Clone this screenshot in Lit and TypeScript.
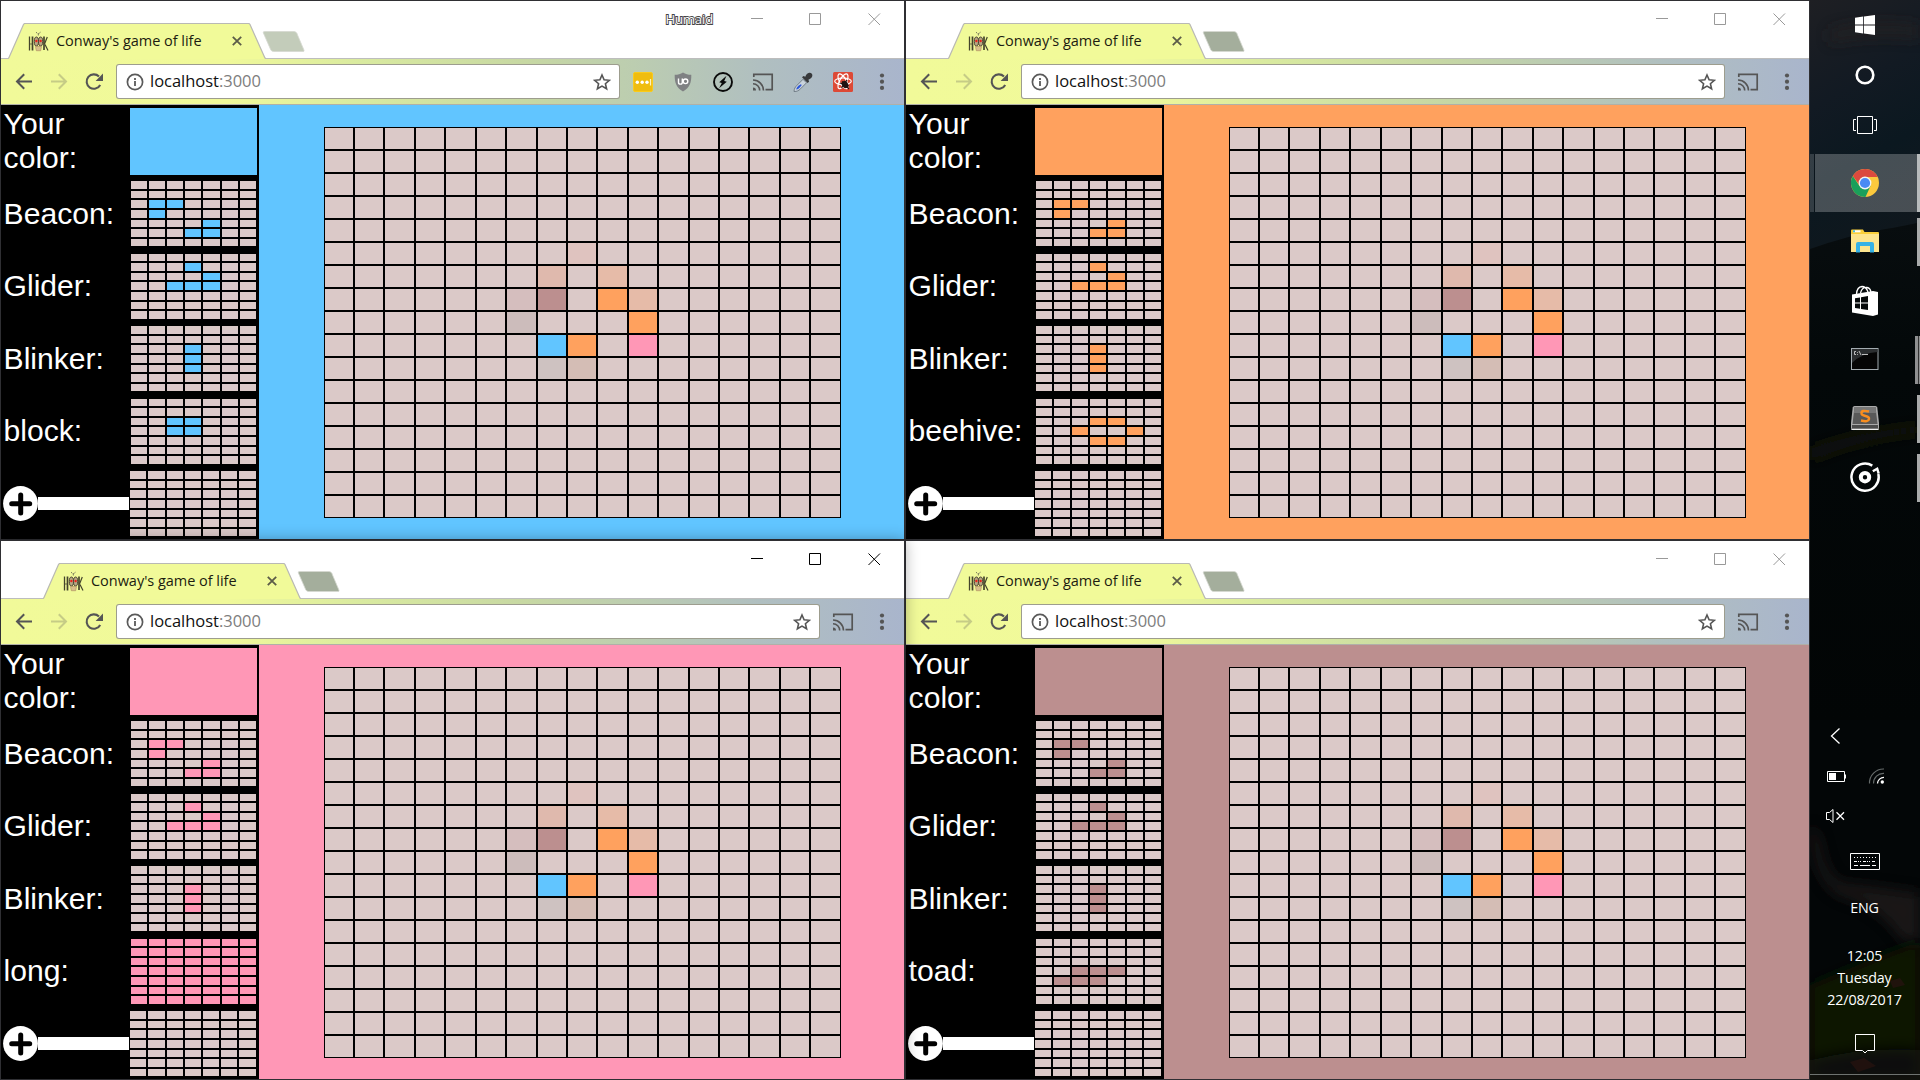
import { LitElement, html, css, svg } from "lit";
import { customElement, property } from "lit/decorators.js";
import { classMap } from "lit/directives/class-map.js";
import { styleMap } from "lit/directives/style-map.js";

type Cell = [number, number];

interface Pattern {
  label: string;
  cells: Cell[];
}

interface Player {
  color: string;
  extra: Pattern;
  tab: "near" | "far";
  active: boolean;
  profile: string;
  extensions: boolean;
}

const BLUE = "#61c5ff";
const ORANGE = "#ffa15e";
const PINK = "#ff97b6";
const ROSE = "#bc8f8f";

const FULL: Cell[] = Array.from({ length: 49 }, (_, i): Cell => [Math.floor(i / 7), i % 7]);

const BASE: Pattern[] = [
  { label: "Beacon:", cells: [[2, 1], [2, 2], [3, 1], [4, 4], [5, 3], [5, 4]] },
  { label: "Glider:", cells: [[1, 3], [2, 4], [3, 2], [3, 3], [3, 4]] },
  { label: "Blinker:", cells: [[2, 3], [3, 3], [4, 3]] },
];

const PLAYERS: Player[] = [
  { color: BLUE, tab: "near", active: false, profile: "Humaid", extensions: true,
    extra: { label: "block:", cells: [[2, 2], [2, 3], [3, 2], [3, 3]] } },
  { color: ORANGE, tab: "far", active: false, profile: "", extensions: false,
    extra: { label: "beehive:", cells: [[2, 3], [2, 4], [3, 2], [3, 5], [4, 3], [4, 4]] } },
  { color: PINK, tab: "far", active: true, profile: "", extensions: false,
    extra: { label: "long:", cells: FULL } },
  { color: ROSE, tab: "far", active: false, profile: "", extensions: false,
    extra: { label: "toad:", cells: [[3, 2], [3, 3], [3, 4], [4, 1], [4, 2], [4, 3]] } },
];

const BOARD: Record<string, string> = {
  "5-8": "#dfc3bf",
  "6-7": "#dfb9ad",
  "6-9": "#e6bba8",
  "7-6": "#d5bebe",
  "7-7": ROSE,
  "7-9": ORANGE,
  "7-10": "#e6bba8",
  "8-6": "#ccbcbb",
  "8-10": ORANGE,
  "9-7": BLUE,
  "9-8": ORANGE,
  "9-10": PINK,
  "10-7": "#cec2c1",
  "10-8": "#d4bdb5",
};

const BOARD_COLUMNS = Array.from({ length: 17 }, (_, k) => {
  const edge = (n: number) => Math.round(323.65 + 30.412 * n);
  return `${edge(k + 1) - edge(k)}px`;
}).join(" ");

/* ---------- Game page ---------- */

@customElement("mini-grid")
class MiniGrid extends LitElement {
  @property({ attribute: false }) cells: Cell[] = [];
  @property() color = "";
  @property() rows = "even";
  @property({ type: Boolean }) empty = false;

  static styles = css`
    :host { display: block; }
    .grid {
      display: grid;
      gap: 2px;
      grid-template-columns: 16px 16px 16px 16px 17px 16px 16px;
      padding: 1px;
      background: #000;
    }
    .even { grid-template-rows: 8px 7px 8px 8px 7px 8px 7px; }
    .odd { grid-template-rows: 7px 8px 7px 8px 8px 7px 8px; }
    .blank {
      padding-left: 0;
      grid-template-columns: 16px 17px 16px 16px 16px 16px 17px;
    }
    .cell { background: #dbc9c8; }
  `;

  render() {
    const alive = new Set(this.cells.map(([r, c]) => r * 7 + c));
    return html`<div class=${classMap({ grid: true, [this.rows]: true, blank: this.empty })}>
      ${FULL.map((_, i) => html`<div class="cell" style=${styleMap(alive.has(i) ? { background: this.color } : {})}></div>`)}
    </div>`;
  }
}

@customElement("game-page")
class GamePage extends LitElement {
  @property({ attribute: false }) player!: Player;

  static styles = css`
    :host { display: block; height: 434px; }
    .page { display: flex; height: 434px; }
    .side {
      width: 258px;
      box-sizing: border-box;
      padding: 3px 0 0 2px;
      background: #000;
      color: #fff;
      font: 30.1px/34px "Liberation Sans", Arial, sans-serif;
    }
    .row { display: flex; align-items: center; height: 67px; margin-bottom: 5px; }
    .row.tall { margin-bottom: 6px; }
    .label { width: 127px; box-sizing: border-box; padding-left: 0.6px; }
    .row.first .label { margin-top: -2px; }
    .row.short .label { margin-top: -2px; }
    .swatch { width: 127px; height: 67px; }
    .maker { width: 127px; display: flex; align-items: center; }
    .plus { width: 35px; height: 35px; display: block; }
    .bar { height: 13px; width: 91px; background: #fff; }
    .main { flex: 1; padding: 22px 0 0 65px; }
    .board {
      display: grid;
      width: 517px;
      grid-auto-rows: 23px;
    }
    .cell { border: 1px solid #000; background: #dbc9c8; }
  `;

  render() {
    const p = this.player;
    const patterns = [...BASE, p.extra];
    return html`
      <div class="page">
        <div class="side">
          <div class="row first">
            <div class="label">Your color:</div>
            <div class="swatch" style=${styleMap({ background: p.color })}></div>
          </div>
          ${patterns.map((x, i) => html`
            <div class=${classMap({ row: true, tall: i % 2 === 0, short: i % 2 === 1 })}>
              <div class="label">${x.label}</div>
              <mini-grid .cells=${x.cells} color=${p.color} rows=${i % 2 ? "odd" : "even"}></mini-grid>
            </div>`)}
          <div class="row">
            <div class="maker">
              <svg class="plus" viewBox="0 0 35 35">
                <circle cx="17.5" cy="17.5" r="17.4" fill="#fff" />
                <path d="M17.7 9v18M8.7 17.7h18" stroke="#000" stroke-width="5" stroke-linecap="round" />
              </svg>
              <div class="bar"></div>
            </div>
            <mini-grid color=${p.color} rows="even" empty></mini-grid>
          </div>
        </div>
        <div class="main" style=${styleMap({ background: p.color })}>
          <div class="board" style=${styleMap({ gridTemplateColumns: BOARD_COLUMNS })}>
            ${Array.from({ length: 289 }, (_, i) => {
              const tint = BOARD[`${Math.floor(i / 17)}-${i % 17}`];
              return html`<div class="cell" style=${styleMap(tint ? { background: tint } : {})}></div>`;
            })}
          </div>
        </div>
      </div>`;
  }
}

/* ---------- Browser window ---------- */

const favicon = svg`<svg class="favicon" viewBox="0 0 21 21">
  <g fill="none" stroke="#44442c">
    <path d="M1.500 5.500v14" stroke-width="1.300" /><path d="M4.500 5.500v14" stroke-width="1.700" /><path d="M2 13h2.500" stroke-width=".7" />
    <path d="M16 5.500v13.500" stroke-width="1.700" /><path d="M16.500 13l2.800-7M17 13.500l3 6" stroke-width="1.200" />
    <path d="M8 1.200l1.200 1M12.500 1.200l-1.200 1M10.300 2v2.500" stroke-width="1" stroke="#77775a" />
  </g>
  <ellipse cx="8.400" cy="10.500" rx="2.100" ry="4.500" fill="#b5a884" stroke="#4a4030" />
  <ellipse cx="12.600" cy="10.500" rx="2.100" ry="4.500" fill="#b5a884" stroke="#4a4030" />
  <circle cx="8.400" cy="10" r="1.200" fill="#e8221c" />
  <circle cx="12.600" cy="10" r="1.200" fill="#e8221c" />
  <path d="M7.500 15.500h6l-.8 4.200H8.300z" fill="#d9c08c" stroke="#a98a5a" stroke-width=".6" />
</svg>`;

const castIcon = svg`<svg class="ext" viewBox="0 0 22 22">
  <path d="M1.800 6V3.300h18.400v15.400H13.500" fill="none" stroke="#555" stroke-width="1.700" />
  <path d="M1 16.500a3 3 0 0 1 3 3H1z" fill="#555" />
  <path d="M1 12.700a6.700 6.700 0 0 1 6.700 6.800M1 9a10.500 10.500 0 0 1 10.500 10.500" fill="none" stroke="#555" stroke-width="1.600" />
</svg>`;

const extensionIcons = [
  svg`<svg class="ext" viewBox="0 0 22 22">
    <rect x="1.500" y="1.500" width="19" height="19" rx="1.500" fill="#efbd10" stroke="#fbcb1a" />
    <circle cx="5.300" cy="11.300" r="1.700" fill="#fff" /><circle cx="10.200" cy="11.300" r="1.700" fill="#fff" />
    <circle cx="15" cy="11.300" r="1.700" fill="#fff" /><path d="M18.500 8v6.500" stroke="#fff3c0" stroke-width="1.200" />
  </svg>`,
  svg`<svg class="ext" viewBox="0 0 22 22">
    <path d="M11 1.500c2.500 1.700 5 2.200 8.300 2.300C19.500 12 17.500 17 11 20.500 4.500 17 2.500 12 2.700 3.800 6 3.700 8.500 3.200 11 1.500z" fill="#7f8183" />
    <path d="M6.500 7.500v3.700a1.900 1.900 0 0 0 3.800 0V7.500" fill="none" stroke="#fff" stroke-width="1.400" />
    <circle cx="13.500" cy="10.300" r="2.300" fill="none" stroke="#fff" stroke-width="1.400" />
  </svg>`,
  svg`<svg class="ext" viewBox="0 0 22 22">
    <circle cx="11" cy="11" r="9" fill="none" stroke="#0a0a0a" stroke-width="1.900" />
    <path d="M14.500 4.800L7.200 11.300l2.600.6-2.700 5.400 7.700-6.600-2.600-.7z" fill="#0a0a0a" />
  </svg>`,
  castIcon,
  svg`<svg class="ext" viewBox="0 0 22 22">
    <path d="M2 20.500c.3-3 1-4.200 3-6.200l6-6 3.500 3.500-6 6c-2 2-3.500 2.700-6.500 2.700z" fill="#c9d3dc" stroke="#6b7680" stroke-width=".9" />
    <path d="M4.200 18.500c.3-1.500 1-2.500 2.200-3.700l2.400-1.500 1 .7-2 2.400c-1.200 1.200-2 1.800-3.600 2.100z" fill="#2a56d8" />
    <path d="M10 6.200l1.500-1.300 1.800.8c.8-2 2-3.700 4-4 2-.2 3.500 1.300 3 3.300-.4 1.800-2 3-3.900 3.700l.7 1.900-1.400 1.500z" fill="#38393b" />
  </svg>`,
  svg`<svg class="ext" viewBox="0 0 22 22">
    <rect x="1" y="1" width="20" height="20" rx="1.500" fill="#dd4936" />
    <g fill="none" stroke="#fff" stroke-width="1.200">
      <ellipse cx="11" cy="10.300" rx="8.300" ry="3.300" />
      <ellipse cx="11" cy="10.300" rx="8.300" ry="3.300" transform="rotate(60 11 10.300)" />
      <ellipse cx="11" cy="10.300" rx="8.300" ry="3.300" transform="rotate(120 11 10.300)" />
    </g>
    <ellipse cx="13" cy="13.500" rx="3" ry="3.800" fill="#201412" transform="rotate(-35 13 13.500)" />
    <path d="M8 12l9 3M9.500 17l5.500-8M10 10.500l7 7.500" stroke="#201412" stroke-width="1.200" />
  </svg>`,
];

@customElement("browser-window")
class BrowserWindow extends LitElement {
  @property({ attribute: false }) player!: Player;

  static styles = css`
    :host { display: block; position: relative; z-index: 0; }
    .window {
      width: 905px;
      height: 540px;
      box-sizing: border-box;
      border: 1px solid #2f2f33;
      background: #fff;
      font-family: "Open Sans", "Noto Sans", sans-serif;
    }
    .window.active { box-shadow: 0 0 14px rgba(0, 0, 0, 0.32); }
    .strip {
      display: flex;
      align-items: flex-end;
      height: 58px;
      box-sizing: border-box;
      border-bottom: 1px solid #bdbdbd;
      padding-left: 7px;
    }
    .strip.far { padding-left: 42px; }
    .tab {
      position: relative;
      display: flex;
      align-items: center;
      width: 258px;
      height: 36px;
      margin-bottom: -1px;
      flex: none;
    }
    .shape { position: absolute; inset: 0; width: 258px; height: 36px; }
    .favicon { position: relative; width: 21px; height: 21px; margin: 0 0 0 20px; }
    .title {
      position: relative;
      margin-left: 7px;
      top: -0.5px;
      width: 160px;
      font-size: 14.5px;
      letter-spacing: -0.03px;
      line-height: 20px;
      color: #1c1c10;
      white-space: nowrap;
    }
    .close { position: relative; width: 10px; height: 10px; margin-left: 16px; }
    .newtab { width: 43px; height: 22px; margin: 0 0 5px -4px; flex: none; }
    .caption {
      display: flex;
      align-self: flex-start;
      align-items: center;
      margin: 11px 23px 0 auto;
      height: 15px;
    }
    .profile {
      margin-right: 38px;
      font-size: 13px;
      line-height: 15px;
      letter-spacing: -0.1px;
      color: #fff;
      -webkit-text-stroke: 1.8px #444;
      paint-order: stroke fill;
    }
    .buttons { width: 130px; height: 13px; stroke: #999; fill: none; }
    .active .buttons { stroke: #000; }
    .toolbar {
      display: flex;
      align-items: center;
      height: 46px;
      box-sizing: border-box;
      border-bottom: 1px solid #b0b0a8;
      background: linear-gradient(90deg, #f1fa99 0%, #f0f99a 25%, #d9eaa0 40%, #c7d8a3 58%, #bccdb0 70%, #b0bfc0 84%, #a9b5cc 100%);
    }
    .nav { width: 88px; height: 18px; margin-left: 14px; margin-top: 0; fill: none; flex: none; }
    .omni {
      display: flex;
      align-items: center;
      flex: 1;
      height: 35px;
      box-sizing: border-box;
      margin-left: 13px;
      padding: 0 8px 0 8.5px;
      border: 1px solid rgba(60, 60, 30, 0.5);
      border-radius: 3px;
      background: #fff;
    }
    .info { width: 18px; height: 18px; }
    .url { margin: -1px 0 0 6.5px; font-size: 16.5px; line-height: 24px; letter-spacing: -0.02px; color: #111; flex: 1; }
    .port { color: #7d7d7d; }
    .star { width: 18px; height: 18px; }
    .exts { display: flex; align-items: center; gap: 18px; margin-left: 12px; }
    .ext { width: 22px; height: 22px; display: block; }
    .menu { width: 6px; height: 18px; margin: 0 19px 0 25.5px; fill: #555; }
  `;

  render() {
    const p = this.player;
    const ghost = p.tab === "near" ? "#c3ccba" : "#a4ae9c";
    return html`
      <div class=${classMap({ window: true, active: p.active })}>
        <div class=${classMap({ strip: true, far: p.tab === "far" })}>
          <div class="tab">
            <svg class="shape" viewBox="0 0 258 36">
              <path d="M0 36V35.500L1 34L15.500 1.500Q16 .5 17 .5H240.500Q241.500 .5 242 1.500L256.500 34Q257 35.500 258 35.500V36Z" fill="#f1fa99" />
              <path d="M0 35.500Q.6 35.500 1 34.500L15.500 1.500Q16 .5 17 .5H240.500Q241.500 .5 242 1.500L256.500 34Q257 35.500 258 35.500" fill="none" stroke="#b9b9b4" stroke-width="1.200" />
            </svg>
            ${favicon}
            <div class="title">Conway's game of life</div>
            <svg class="close" viewBox="0 0 10 10"><path d="M.8 .8l8.400 8.400M9.200 .8L.8 9.200" stroke="#5c5c48" stroke-width="1.800" /></svg>
          </div>
          <svg class="newtab" viewBox="0 0 43 22">
            <path d="M3 .5H32q2 0 2.800 1.800L42 19.200q.5 1.300-1 1.300H11.500q-2 0-2.800-1.800L1.300 1.800Q.8 .5 3 .5z" fill=${ghost} stroke="#d5d8d0" stroke-width=".8" />
          </svg>
          <div class="caption">
            <div class="profile">${p.profile}</div>
            <svg class="buttons" viewBox="0 0 130 13">
              <path d="M0 5.500h12M58.500 .5h11v11h-11zM117.500 .5l11.500 11.500M129 .5l-11.500 11.500" />
            </svg>
          </div>
        </div>
        <div class="toolbar">
          <svg class="nav" viewBox="0 0 88 18">
            <path d="M17 8.500H2.500M9.200 1.300L2 8.500l7.200 7.200" stroke="#555" stroke-width="2" />
            <path d="M36 8.500h14.500M43.800 1.300L51 8.500l-7.200 7.200" stroke="#555" stroke-opacity=".28" stroke-width="2" />
            <path d="M85.200 12A7.200 7.200 0 1 1 84 3.500" stroke="#555" stroke-width="2.100" />
            <path d="M88 .5v7.400h-7.400z" fill="#555" />
          </svg>
          <div class="omni">
            <svg class="info" viewBox="0 0 18 18">
              <circle cx="9" cy="9" r="7.600" fill="none" stroke="#5a5a5a" stroke-width="1.700" />
              <path d="M9 8v5M9 5v1.900" stroke="#5a5a5a" stroke-width="1.800" />
            </svg>
            <div class="url">localhost<span class="port">:3000</span></div>
            <svg class="star" viewBox="0 0 18 18">
              <path d="M9 2l2.100 4.800 5.200.5-3.900 3.400 1.200 5.100L9 13.100l-4.600 2.700 1.200-5.100-3.900-3.400 5.200-.5z" fill="none" stroke="#555" stroke-width="1.600" />
            </svg>
          </div>
          <div class="exts">${p.extensions ? extensionIcons : castIcon}</div>
          <svg class="menu" viewBox="0 0 6 18"><circle cx="3" cy="2.500" r="2.100" /><circle cx="3" cy="8.700" r="2.100" /><circle cx="3" cy="14.900" r="2.100" /></svg>
        </div>
        <game-page .player=${p}></game-page>
      </div>`;
  }
}

/* ---------- Taskbar ---------- */

@customElement("task-bar")
class TaskBar extends LitElement {
  static styles = css`
    :host { display: block; position: relative; width: 110px; height: 1080px; overflow: hidden; background: #030607; }
    .scene { position: absolute; inset: 0; width: 110px; height: 1080px; }
    .col {
      position: relative;
      display: flex;
      flex-direction: column;
      height: 1080px;
      color: #fff;
      font: 14.3px/22px "Open Sans", "Noto Sans", sans-serif;
      letter-spacing: -0.15px;
    }
    .sys { height: 50px; display: grid; place-items: center; }
    .apps { margin-top: 4px; display: flex; flex-direction: column; gap: 1px; }
    .app {
      height: 58px;
      display: grid;
      place-items: center;
      box-sizing: border-box;
      padding: 5px 3px;
      position: relative;
    }
    .app.up { padding: 4px 3px 6px; }
    .app.on { background: linear-gradient(90deg, rgba(255,255,255,.16) 4px, rgba(0,0,0,.15) 4px 5px, rgba(255,255,255,.24) 5px); }
    .mark { position: absolute; right: 0; top: 5px; bottom: 5px; width: 3px; background: #a9abab; }
    .on .mark { top: 0; bottom: 0; background: #b8bbbc; }
    .pair .mark { width: 5px; background: linear-gradient(90deg, #8f9091 3px, #333 3px 4px, #8f9091 4px); }
    svg { display: block; }
    .i30 { width: 30px; height: 30px; }
    .tray { margin-top: 219px; display: grid; grid-template-columns: 36px 1fr; row-gap: 20px; padding-left: 16px; }
    .tray svg { width: 20px; height: 20px; }
    .net { margin-left: 6px; }
    .keys { width: 30px; height: 17px; margin: 27px auto 0; }
    .lang { text-align: center; margin-top: 27px; padding-right: 1px; }
    .clock { text-align: center; margin-top: 26px; padding-right: 1px; }
    .note { width: 20px; height: 21px; margin: 23px auto 0; }
    .peek { height: 1px; background: #6f7370; margin-top: 19px; }
  `;

  render() {
    return html`
      <svg class="scene" viewBox="0 0 110 1080" preserveAspectRatio="none">
        <defs>
          <linearGradient id="sky" x1="0" y1="0" x2=".2" y2="1">
            <stop offset="0" stop-color="#1e1f23" /><stop offset=".35" stop-color="#121a23" />
            <stop offset=".6" stop-color="#0b1820" /><stop offset="1" stop-color="#11171c" />
          </linearGradient>
          <linearGradient id="hill" x1="0" y1="0" x2="0" y2="1">
            <stop offset="0" stop-color="#080d0f" /><stop offset=".3" stop-color="#030809" /><stop offset="1" stop-color="#020505" />
          </linearGradient>
          <filter id="soft" x="-40%" y="-60%" width="180%" height="220%"><feGaussianBlur stdDeviation="7" /></filter>
        </defs>
        <rect width="110" height="300" fill="url(#sky)" />
        <path d="M20 30q40-12 90-5v14q-50-6-90 4z" fill="#262320" opacity=".7" filter="url(#soft)" />
        <path d="M0 249Q40 235 70 230T110 222V720H0z" fill="url(#hill)" />
        <path d="M0 448q50-18 110-24v10q-60 6-110 28z" fill="#14160a" filter="url(#soft)" />
        <path d="M0 825q8 4 12 24 6 28 20 34l34 4 44 6v50H94Q70 906 30 896 6 884 0 835z" fill="#201d1b" opacity=".75" filter="url(#soft)" />
        <path d="M0 985q60-26 110-44v139H0z" fill="#0a1204" filter="url(#soft)" />
        <path d="M0 1060q60-14 110-10v30H0z" fill="#07080a" filter="url(#soft)" />
        <path d="M80 981l10-3 5 7-12 3zM40 1062l14-4 12 8-18 6z" fill="#25130f" opacity=".8" />
      </svg>
      <div class="col">
        <div class="sys">
          <svg class="i30" viewBox="0 0 30 30"><path d="M5 7.800l8.200-1.200v8H5zM14 6.500L25 5v9.600H14zM5 15.600h8.200v7.900L5 22.300zM14 15.600h11v9.500l-11-1.500z" fill="#fff" /></svg>
        </div>
        <div class="sys">
          <svg class="i30" viewBox="0 0 30 30"><circle cx="15" cy="15" r="8.300" fill="none" stroke="#fff" stroke-width="2.600" /></svg>
        </div>
        <div class="sys">
          <svg class="i30" viewBox="0 0 30 30"><path d="M7.500 6.500h15v17h-15zM6 9.500H3.500v11H6M24 9.500h2.500v11H24" fill="none" stroke="#fff" /></svg>
        </div>
        <div class="apps">
          <div class="app on">
            <svg class="i30" viewBox="0 0 30 30">
              <circle cx="15" cy="15" r="14" fill="#fbc93d" />
              <path d="M15 15L20.500 18 15.500 29A14 14 0 0 1 2.900 8L9.500 18z" fill="#1a9f5b" />
              <path d="M2.900 8A14 14 0 0 1 27.600 9H15a6 6 0 0 0-5.800 7.500z" fill="#db4a3e" />
              <circle cx="15" cy="15" r="6.400" fill="#f3f5f5" /><circle cx="15" cy="15" r="5.100" fill="#4a8af4" />
            </svg><div class="mark"></div>
          </div>
          <div class="app up">
            <svg class="i30" viewBox="0 0 30 30">
              <path d="M1 4.500Q1 3.500 2 3.500h11l1.500 2.500H28q1 0 1 1V25q0 1-1 1H2q-1 0-1-1z" fill="#f9cf3a" />
              <path d="M1 8h28v17.500q0 .5-.5.500h-27Q1 26 1 25.500z" fill="#fde58e" />
              <path d="M3 4.300h7.500v2H3z" fill="#fff" /><path d="M3 4.300h2v2H3z" fill="#4cc0dc" />
              <path d="M6 26.500V18q0-2 2-2h14q2 0 2 2v8.500h-4V20H10v6.500z" fill="#36b2e6" />
            </svg><div class="mark"></div>
          </div>
          <div class="app">
            <svg width="30" height="32" viewBox="0 0 30 32">
              <path d="M6.500 9Q7 2 12 1.500 16 1.500 18 7M10.500 8Q12 2 17 2.500q3.500.5 4 5" fill="none" stroke="#fff" stroke-width="1.300" />
              <path d="M2 9.500L23 6l5 1v22.500L23 31 2 27.500z" fill="#fff" />
              <path d="M5 13.200l5-.8v5.100H5zM11 12.200l7-1.200v6.500h-7zM5 18.500h5v5.300l-5-.8zM11 18.500h7v6.500l-7-1.100z" fill="#05090a" />
            </svg>
          </div>
          <div class="app up pair">
            <svg class="i30" viewBox="0 0 30 30">
              <rect x="1.500" y="4.500" width="26.500" height="21" fill="#050505" stroke="#a3abb0" />
              <path d="M2 5h25.500v3Q12 9 2 19z" fill="#2b2e30" />
              <path d="M6 7.500H4.500v3H6M7.500 8v.8M7.500 10v.8M9 7l2 4M12 10.500h6" fill="none" stroke="#cfcfcf" stroke-width=".9" />
            </svg><div class="mark"></div>
          </div>
          <div class="app up">
            <svg class="i30" viewBox="0 0 30 30">
              <path d="M4.500 3h21q1.500 0 1.800 1.500L29 20v5q0 2-2 2H3q-2 0-2-2v-5L2.700 4.500Q3 3 4.500 3z" fill="#aaa" />
              <path d="M4.500 4h21l2 17h-25z" fill="#595959" /><path d="M4.500 4h21l.7 6H3.800z" fill="#777" />
              <path d="M2 22h26v3.500H2z" fill="#4c4c4c" /><path d="M1.500 26.500h27" stroke="#eee" />
              <path d="M19 8.500Q11 6.500 11.500 10.500 11.500 12 15.500 13q4 1 3.500 3-.5 3.500-8 1.500" fill="none" stroke="#f98e1f" stroke-width="2.400" />
            </svg><div class="mark"></div>
          </div>
          <div class="app up">
            <svg class="i30" viewBox="0 0 30 30">
              <path d="M22.300 3.600A13.600 13.600 0 1 0 28.300 12" fill="none" stroke="#fff" stroke-width="2.500" />
              <path d="M22.800 9.300l4.400-2.600 1.500 5" fill="none" stroke="#fff" stroke-width="2.400" />
              <circle cx="15" cy="15.200" r="4.200" fill="none" stroke="#fff" stroke-width="4" />
            </svg><div class="mark"></div>
          </div>
        </div>
        <div class="tray">
          <svg viewBox="0 0 20 20"><path d="M13.500 2.500L5.500 10l8 7.500" fill="none" stroke="#fff" stroke-width="1.300" /></svg><span></span>
          <svg viewBox="0 0 20 20"><path d="M1.500 5.500h17v10h-17z" fill="none" stroke="#fff" /><path d="M3 7h7v7H3zM19 8.500h1v4h-1z" fill="#fff" /></svg>
          <svg class="net" viewBox="0 0 20 20">
            <path d="M1.500 17.500A14 14 0 0 1 16 3M5.500 17.500A10 10 0 0 1 16 7.300" fill="none" stroke="#666b6b" stroke-width="1.200" />
            <path d="M9.500 17.500A6.500 6.500 0 0 1 16 11.300" fill="none" stroke="#fff" stroke-width="1.300" /><circle cx="14.300" cy="16" r="1.700" fill="#fff" />
          </svg>
          <svg viewBox="0 0 20 20"><path d="M.5 6.500h3l3.500-3v13l-3.500-3h-3z" fill="none" stroke="#fff" /><path d="M10.500 6.200l7.500 7.500M18 6.200l-7.500 7.500" stroke="#fff" stroke-width="1.300" /></svg>
        </div>
        <svg class="keys" viewBox="0 0 30 17">
          <path d="M.5 .5h29v16H.5z" fill="none" stroke="#fff" />
          <path d="M4 4.500h22" stroke="#fff" stroke-dasharray="1 2" /><path d="M4 8.500h22" stroke="#fff" stroke-dasharray="3 1 1 1 1 2" />
          <path d="M4 12.500h4M10 12.500h10M22 12.500h4" stroke="#fff" />
        </svg>
        <div class="lang">ENG</div>
        <div class="clock">12:05<br />Tuesday<br />22/08/2017</div>
        <svg class="note" viewBox="0 0 20 21"><path d="M.5 .5h19v16h-7L10 19l-2.500-2.500h-7z" fill="none" stroke="#fff" /></svg>
        <div class="peek"></div>
      </div>`;
  }
}

@customElement("app-root")
class AppRoot extends LitElement {
  static styles = css`
    :host { display: block; width: 1920px; height: 1080px; overflow: hidden; }
    .desktop { display: flex; }
    .windows { display: grid; grid-template-columns: 905px 905px; grid-template-rows: 540px 540px; overflow: hidden; }
    .front { z-index: 2; }
  `;

  render() {
    return html`
      <div class="desktop">
        <div class="windows">
          ${PLAYERS.map((p) => html`<browser-window class=${classMap({ front: p.active })} .player=${p}></browser-window>`)}
        </div>
        <task-bar></task-bar>
      </div>`;
  }
}
